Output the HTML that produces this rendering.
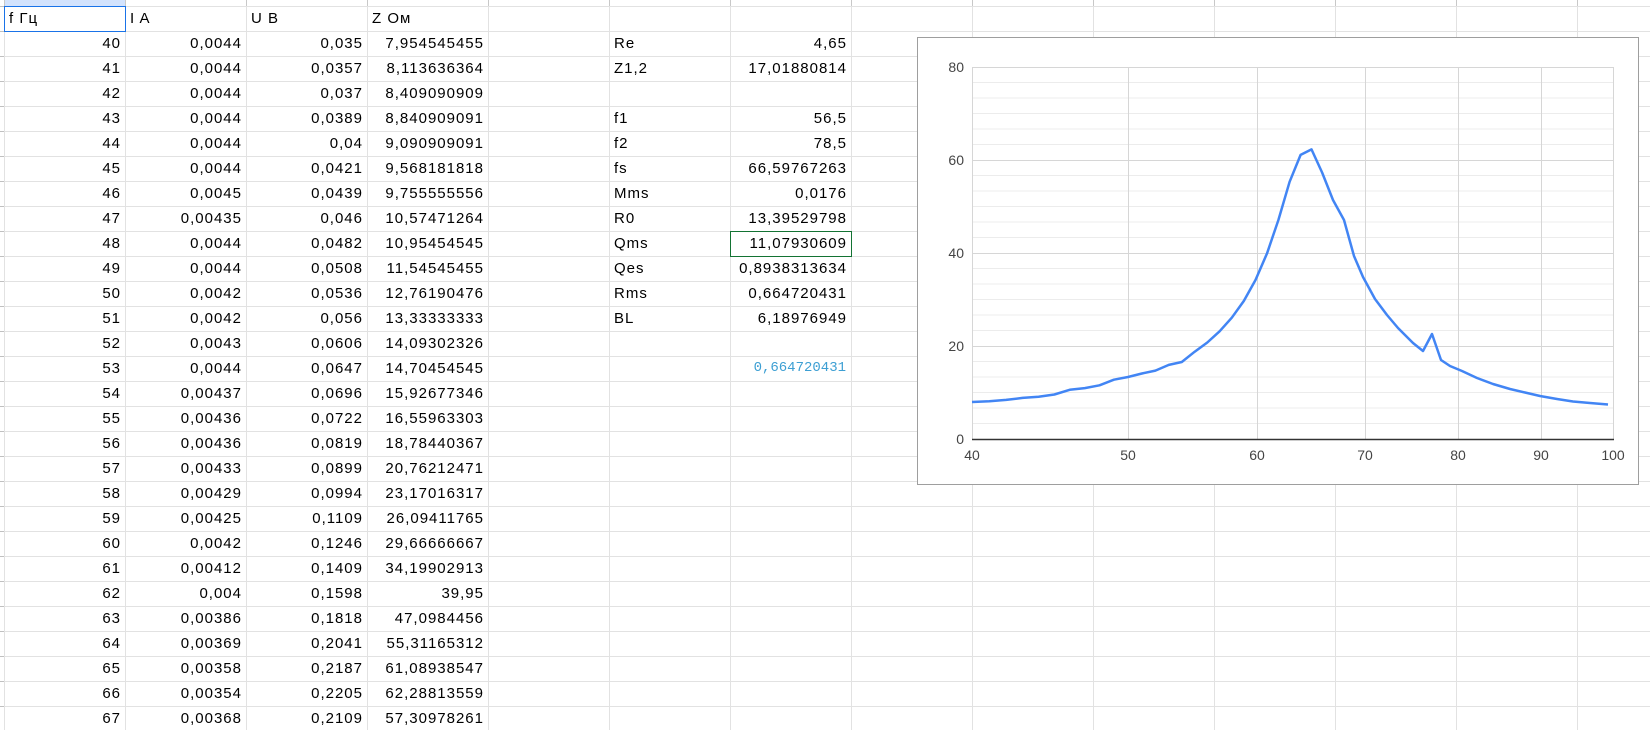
<!DOCTYPE html>
<html><head><meta charset="utf-8">
<style>
html,body{margin:0;padding:0;background:#fff;}
body{width:1650px;height:730px;position:relative;overflow:hidden;font-family:"Liberation Sans",Arial,sans-serif;}
#grid{position:absolute;left:4px;top:6px;width:1646px;height:724px;
background-image:repeating-linear-gradient(to right,#e2e2e2 0 1px,transparent 1px 121px),repeating-linear-gradient(to bottom,#e2e2e2 0 1px,transparent 1px 25px);}
#top{position:absolute;left:4px;top:0;width:1646px;height:6px;background-image:repeating-linear-gradient(to right,#c8c8c8 0 1px,transparent 1px 121px);}
#topa{position:absolute;left:5px;top:0;width:120px;height:6px;background:#d3e3fd;}
#gut{position:absolute;left:0;top:6px;width:4px;height:724px;background-image:repeating-linear-gradient(to bottom,#c0c0c0 0 1px,transparent 1px 25px);}
.c{position:absolute;width:121px;height:25px;line-height:25px;font-size:15px;letter-spacing:1px;color:#000;box-sizing:border-box;white-space:nowrap;}
.r{text-align:right;padding-right:4px;}
.l{text-align:left;padding-left:5px;}
</style></head><body>
<div id="top"></div><div id="topa"></div><div id="gut"></div>
<div id="grid"></div>
<div style="position:absolute;left:4px;top:6px;width:122px;height:26px;box-sizing:border-box;border:1px solid #1a73e8;"></div>
<div style="position:absolute;left:730px;top:231px;width:122px;height:26px;box-sizing:border-box;border:1px solid #137333;"></div>

<div class="c l" style="left:4px;top:6px">f Гц</div>
<div class="c l" style="left:125px;top:6px">I A</div>
<div class="c l" style="left:246px;top:6px">U B</div>
<div class="c l" style="left:367px;top:6px">Z Ом</div>

<div class="c r" style="left:4px;top:31px">40</div><div class="c r" style="left:125px;top:31px">0,0044</div><div class="c r" style="left:246px;top:31px">0,035</div><div class="c r" style="left:367px;top:31px">7,954545455</div>
<div class="c r" style="left:4px;top:56px">41</div><div class="c r" style="left:125px;top:56px">0,0044</div><div class="c r" style="left:246px;top:56px">0,0357</div><div class="c r" style="left:367px;top:56px">8,113636364</div>
<div class="c r" style="left:4px;top:81px">42</div><div class="c r" style="left:125px;top:81px">0,0044</div><div class="c r" style="left:246px;top:81px">0,037</div><div class="c r" style="left:367px;top:81px">8,409090909</div>
<div class="c r" style="left:4px;top:106px">43</div><div class="c r" style="left:125px;top:106px">0,0044</div><div class="c r" style="left:246px;top:106px">0,0389</div><div class="c r" style="left:367px;top:106px">8,840909091</div>
<div class="c r" style="left:4px;top:131px">44</div><div class="c r" style="left:125px;top:131px">0,0044</div><div class="c r" style="left:246px;top:131px">0,04</div><div class="c r" style="left:367px;top:131px">9,090909091</div>
<div class="c r" style="left:4px;top:156px">45</div><div class="c r" style="left:125px;top:156px">0,0044</div><div class="c r" style="left:246px;top:156px">0,0421</div><div class="c r" style="left:367px;top:156px">9,568181818</div>
<div class="c r" style="left:4px;top:181px">46</div><div class="c r" style="left:125px;top:181px">0,0045</div><div class="c r" style="left:246px;top:181px">0,0439</div><div class="c r" style="left:367px;top:181px">9,755555556</div>
<div class="c r" style="left:4px;top:206px">47</div><div class="c r" style="left:125px;top:206px">0,00435</div><div class="c r" style="left:246px;top:206px">0,046</div><div class="c r" style="left:367px;top:206px">10,57471264</div>
<div class="c r" style="left:4px;top:231px">48</div><div class="c r" style="left:125px;top:231px">0,0044</div><div class="c r" style="left:246px;top:231px">0,0482</div><div class="c r" style="left:367px;top:231px">10,95454545</div>
<div class="c r" style="left:4px;top:256px">49</div><div class="c r" style="left:125px;top:256px">0,0044</div><div class="c r" style="left:246px;top:256px">0,0508</div><div class="c r" style="left:367px;top:256px">11,54545455</div>
<div class="c r" style="left:4px;top:281px">50</div><div class="c r" style="left:125px;top:281px">0,0042</div><div class="c r" style="left:246px;top:281px">0,0536</div><div class="c r" style="left:367px;top:281px">12,76190476</div>
<div class="c r" style="left:4px;top:306px">51</div><div class="c r" style="left:125px;top:306px">0,0042</div><div class="c r" style="left:246px;top:306px">0,056</div><div class="c r" style="left:367px;top:306px">13,33333333</div>
<div class="c r" style="left:4px;top:331px">52</div><div class="c r" style="left:125px;top:331px">0,0043</div><div class="c r" style="left:246px;top:331px">0,0606</div><div class="c r" style="left:367px;top:331px">14,09302326</div>
<div class="c r" style="left:4px;top:356px">53</div><div class="c r" style="left:125px;top:356px">0,0044</div><div class="c r" style="left:246px;top:356px">0,0647</div><div class="c r" style="left:367px;top:356px">14,70454545</div>
<div class="c r" style="left:4px;top:381px">54</div><div class="c r" style="left:125px;top:381px">0,00437</div><div class="c r" style="left:246px;top:381px">0,0696</div><div class="c r" style="left:367px;top:381px">15,92677346</div>
<div class="c r" style="left:4px;top:406px">55</div><div class="c r" style="left:125px;top:406px">0,00436</div><div class="c r" style="left:246px;top:406px">0,0722</div><div class="c r" style="left:367px;top:406px">16,55963303</div>
<div class="c r" style="left:4px;top:431px">56</div><div class="c r" style="left:125px;top:431px">0,00436</div><div class="c r" style="left:246px;top:431px">0,0819</div><div class="c r" style="left:367px;top:431px">18,78440367</div>
<div class="c r" style="left:4px;top:456px">57</div><div class="c r" style="left:125px;top:456px">0,00433</div><div class="c r" style="left:246px;top:456px">0,0899</div><div class="c r" style="left:367px;top:456px">20,76212471</div>
<div class="c r" style="left:4px;top:481px">58</div><div class="c r" style="left:125px;top:481px">0,00429</div><div class="c r" style="left:246px;top:481px">0,0994</div><div class="c r" style="left:367px;top:481px">23,17016317</div>
<div class="c r" style="left:4px;top:506px">59</div><div class="c r" style="left:125px;top:506px">0,00425</div><div class="c r" style="left:246px;top:506px">0,1109</div><div class="c r" style="left:367px;top:506px">26,09411765</div>
<div class="c r" style="left:4px;top:531px">60</div><div class="c r" style="left:125px;top:531px">0,0042</div><div class="c r" style="left:246px;top:531px">0,1246</div><div class="c r" style="left:367px;top:531px">29,66666667</div>
<div class="c r" style="left:4px;top:556px">61</div><div class="c r" style="left:125px;top:556px">0,00412</div><div class="c r" style="left:246px;top:556px">0,1409</div><div class="c r" style="left:367px;top:556px">34,19902913</div>
<div class="c r" style="left:4px;top:581px">62</div><div class="c r" style="left:125px;top:581px">0,004</div><div class="c r" style="left:246px;top:581px">0,1598</div><div class="c r" style="left:367px;top:581px">39,95</div>
<div class="c r" style="left:4px;top:606px">63</div><div class="c r" style="left:125px;top:606px">0,00386</div><div class="c r" style="left:246px;top:606px">0,1818</div><div class="c r" style="left:367px;top:606px">47,0984456</div>
<div class="c r" style="left:4px;top:631px">64</div><div class="c r" style="left:125px;top:631px">0,00369</div><div class="c r" style="left:246px;top:631px">0,2041</div><div class="c r" style="left:367px;top:631px">55,31165312</div>
<div class="c r" style="left:4px;top:656px">65</div><div class="c r" style="left:125px;top:656px">0,00358</div><div class="c r" style="left:246px;top:656px">0,2187</div><div class="c r" style="left:367px;top:656px">61,08938547</div>
<div class="c r" style="left:4px;top:681px">66</div><div class="c r" style="left:125px;top:681px">0,00354</div><div class="c r" style="left:246px;top:681px">0,2205</div><div class="c r" style="left:367px;top:681px">62,28813559</div>
<div class="c r" style="left:4px;top:706px">67</div><div class="c r" style="left:125px;top:706px">0,00368</div><div class="c r" style="left:246px;top:706px">0,2109</div><div class="c r" style="left:367px;top:706px">57,30978261</div>

<div class="c l" style="left:609px;top:31px">Re</div><div class="c r" style="left:730px;top:31px">4,65</div>
<div class="c l" style="left:609px;top:56px">Z1,2</div><div class="c r" style="left:730px;top:56px">17,01880814</div>
<div class="c l" style="left:609px;top:106px">f1</div><div class="c r" style="left:730px;top:106px">56,5</div>
<div class="c l" style="left:609px;top:131px">f2</div><div class="c r" style="left:730px;top:131px">78,5</div>
<div class="c l" style="left:609px;top:156px">fs</div><div class="c r" style="left:730px;top:156px">66,59767263</div>
<div class="c l" style="left:609px;top:181px">Mms</div><div class="c r" style="left:730px;top:181px">0,0176</div>
<div class="c l" style="left:609px;top:206px">R0</div><div class="c r" style="left:730px;top:206px">13,39529798</div>
<div class="c l" style="left:609px;top:231px">Qms</div><div class="c r" style="left:730px;top:231px">11,07930609</div>
<div class="c l" style="left:609px;top:256px">Qes</div><div class="c r" style="left:730px;top:256px">0,8938313634</div>
<div class="c l" style="left:609px;top:281px">Rms</div><div class="c r" style="left:730px;top:281px">0,664720431</div>
<div class="c l" style="left:609px;top:306px">BL</div><div class="c r" style="left:730px;top:306px">6,18976949</div>
<div class="c r" style="left:730px;top:356px;font-family:'Liberation Mono',monospace;font-size:14px;letter-spacing:0;padding-right:5px;color:#3d9fd3">0,664720431</div>

<svg style="position:absolute;left:0;top:0" width="1650" height="730" xmlns="http://www.w3.org/2000/svg">
<rect x="917.5" y="37.5" width="721" height="447" fill="#fff" stroke="#9e9e9e"/>
<g stroke="#ececec" stroke-width="1">
<line x1="972" x2="1613" y1="82.5" y2="82.5"/><line x1="972" x2="1613" y1="98" y2="98"/><line x1="972" x2="1613" y1="113.5" y2="113.5"/><line x1="972" x2="1613" y1="129" y2="129"/><line x1="972" x2="1613" y1="144.5" y2="144.5"/>
<line x1="972" x2="1613" y1="175.5" y2="175.5"/><line x1="972" x2="1613" y1="191" y2="191"/><line x1="972" x2="1613" y1="206.5" y2="206.5"/><line x1="972" x2="1613" y1="222" y2="222"/><line x1="972" x2="1613" y1="237.5" y2="237.5"/>
<line x1="972" x2="1613" y1="268.5" y2="268.5"/><line x1="972" x2="1613" y1="284" y2="284"/><line x1="972" x2="1613" y1="299.5" y2="299.5"/><line x1="972" x2="1613" y1="315" y2="315"/><line x1="972" x2="1613" y1="330.5" y2="330.5"/>
<line x1="972" x2="1613" y1="361.5" y2="361.5"/><line x1="972" x2="1613" y1="377" y2="377"/><line x1="972" x2="1613" y1="392.5" y2="392.5"/><line x1="972" x2="1613" y1="408" y2="408"/><line x1="972" x2="1613" y1="423.5" y2="423.5"/>
</g>
<g stroke="#d6d6d6" stroke-width="1">
<line x1="972" x2="1613" y1="67.5" y2="67.5"/><line x1="972" x2="1613" y1="160.5" y2="160.5"/><line x1="972" x2="1613" y1="253.5" y2="253.5"/><line x1="972" x2="1613" y1="346.5" y2="346.5"/>
<line x1="972.5" x2="972.5" y1="67" y2="439"/><line x1="1128.5" x2="1128.5" y1="67" y2="439"/><line x1="1257.5" x2="1257.5" y1="67" y2="439"/><line x1="1365.5" x2="1365.5" y1="67" y2="439"/><line x1="1458.5" x2="1458.5" y1="67" y2="439"/><line x1="1541.5" x2="1541.5" y1="67" y2="439"/><line x1="1613.5" x2="1613.5" y1="67" y2="439"/>
</g>
<line x1="972" x2="1614" y1="439.5" y2="439.5" stroke="#333" stroke-width="1.5"/>
<polyline fill="none" stroke="#4285f4" stroke-width="2.5" stroke-linejoin="round" points="972,402 989.3,401.3 1006.1,399.9 1022.6,397.9 1038.6,396.7 1054.4,394.5 1069.7,389.8 1084.8,388.1 1099.5,385.3 1113.9,379.7 1128,377 1141.9,373.5 1155.4,370.6 1168.8,364.9 1181.8,362 1194.7,351.7 1207.3,342.5 1219.6,331.3 1231.8,317.7 1243.8,301 1255.5,280 1267.1,253.2 1278.4,220 1289.6,181.8 1300.6,154.9 1311.5,149.4 1322.1,172.5 1333,200 1344,220 1354,256 1363,277 1375,299 1387,315 1398,328 1413,343 1423,351 1432,334 1441,360 1450,366 1462,371 1477,378 1493,384 1510,389 1525,392.5 1540,396 1557,399 1573,401.5 1590,403 1608,404.5"/>
<g font-family="Liberation Sans,Arial,sans-serif" font-size="14" fill="#444">
<text x="964" y="72" text-anchor="end">80</text>
<text x="964" y="165" text-anchor="end">60</text>
<text x="964" y="258" text-anchor="end">40</text>
<text x="964" y="351" text-anchor="end">20</text>
<text x="964" y="444" text-anchor="end">0</text>
<text x="972" y="460" text-anchor="middle">40</text>
<text x="1128" y="460" text-anchor="middle">50</text>
<text x="1257" y="460" text-anchor="middle">60</text>
<text x="1365" y="460" text-anchor="middle">70</text>
<text x="1458" y="460" text-anchor="middle">80</text>
<text x="1541" y="460" text-anchor="middle">90</text>
<text x="1613" y="460" text-anchor="middle">100</text>
</g>
</svg>
</body></html>
